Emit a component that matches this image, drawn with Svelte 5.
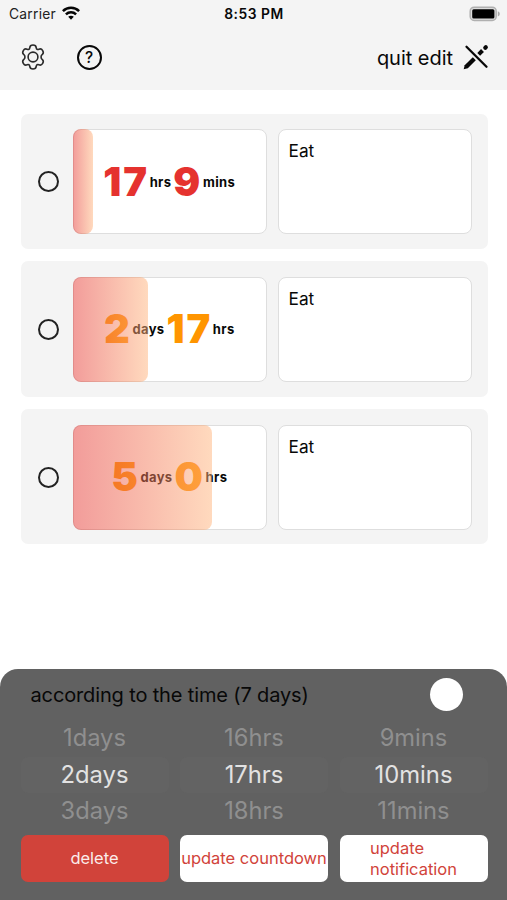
<script>
  const rows = [
    { a: '17', au: 'hrs', b: '9', bu: 'mins', color: '#e5322f', fill: 19.5 },
    { a: '2', au: 'days', b: '17', bu: 'hrs', color: '#ff9500', fill: 75 },
    { a: '5', au: 'days', b: '0', bu: 'hrs', color: '#ff9500', fill: 138.5 },
  ];
  const wheels = [
    ['1days', '2days', '3days'],
    ['16hrs', '17hrs', '18hrs'],
    ['9mins', '10mins', '11mins'],
  ];
</script>

<div class="screen">
  <header>
    <div class="status">
      <div class="carrier">
        <span>Carrier</span>
        <svg width="18" height="14" viewBox="0 0 18 14" fill="none" stroke="#050505" stroke-width="2.5">
          <path d="M.9 5.1C5.4.6 12.6.6 17.1 5.1" />
          <path d="M3.9 8.3c2.9-2.8 7.3-2.8 10.2 0" />
          <path d="M9 13.7 6.2 10.8c1.6-1.5 4-1.5 5.6 0Z" fill="#050505" stroke="none" />
        </svg>
      </div>
      <div class="clock">8:53 PM</div>
      <svg class="battery" width="32" height="16" viewBox="0 0 32 16">
        <rect x="1.2" y="1.2" width="26" height="13.2" rx="4" fill="#dcdcdc" stroke="#b0b0b0" stroke-width="1.5" />
        <rect x="3.2" y="3.2" width="22.2" height="9.2" rx="1.5" fill="#000" />
        <path d="M28.8 5.2c2.6.8 2.6 4.4 0 5.2Z" fill="#aaa" />
      </svg>
    </div>
    <nav>
      <svg class="gear" width="26" height="26" viewBox="0 0 26 26" fill="none" stroke="#2a2a2a" stroke-width="1.6" stroke-linejoin="round">
        <path d="M9.800 3.600C10 1.500 10.800 1 13 1s3 .5 3.200 2.600c.2 1.700 1.200 2.300 2.700 1.600 1.900-.9 2.700-.5 3.800 1.400s1.100 2.800-.6 4c-1.400 1-1.400 3.800 0 4.800 1.700 1.200 1.700 2.100.6 4s-1.900 2.300-3.800 1.400c-1.500-.7-2.500-.1-2.700 1.600-.2 2.100-1 2.600-3.200 2.600s-3-.5-3.200-2.600c-.2-1.700-1.200-2.300-2.700-1.600-1.900.9-2.700.5-3.800-1.400s-1.100-2.800.6-4c1.400-1 1.400-3.800 0-4.800-1.700-1.200-1.700-2.100-.6-4s1.900-2.300 3.800-1.400c1.500.7 2.500.1 2.700-1.600Z" />
        <circle cx="13" cy="13" r="4.900" />
      </svg>
      <div class="help">?</div>
      <div class="quit">
        <span>quit edit</span>
        <svg width="26" height="26" viewBox="0 0 26 26" stroke="#080808" fill="#080808">
          <path d="M.7 25.300 1.700 21.200 9.800 13.200l3 3L4.800 24.200Z" stroke="none" />
          <path d="m15.700 10.300 3.800-3.800" stroke-width="4" />
          <path d="m22.300 3.700.5-.5" stroke-width="4.200" stroke-linecap="round" />
          <path d="m3 2 21.200 21.200" stroke="#f4f4f4" stroke-width="4" />
          <path d="m3.500 2.800 20 20" stroke-width="2.300" stroke-linecap="round" />
        </svg>
      </div>
    </nav>
  </header>

  <main>
    {#each rows as r}
      <section class="card">
        <div class="radio"></div>
        <div class="box timer">
          <div class="time">
            <b style:color={r.color}>{r.a}</b><i>{r.au}</i><b style:color={r.color}>{r.b}</b><i>{r.bu}</i>
          </div>
          <div class="fill" style:width="{r.fill}px"></div>
        </div>
        <div class="box note">Eat</div>
      </section>
    {/each}
  </main>

  <footer>
    <div class="option">
      <span>according to the time (7 days)</span>
      <div class="switch"><div class="knob"></div></div>
    </div>
    <div class="wheels">
      {#each wheels as w}
        <div class="wheel">
          {#each w as item, i}
            <div class="item" class:selected={i === 1}>{item}</div>
          {/each}
        </div>
      {/each}
    </div>
    <div class="actions">
      <button class="delete">delete</button>
      <button>update countdown</button>
      <button class="two"><span>update<br />notification</span></button>
    </div>
  </footer>
</div>

<style>
  :global(body) { margin: 0; background: #fff; }
  .screen {
    width: 507px; height: 900px; display: flex; flex-direction: column;
    overflow: hidden; background: #fff; color: #080808;
    font-family: Inter, "Liberation Sans", sans-serif;
  }
  header { height: 90px; background: #f4f4f4; flex: none; }
  .status {
    height: 28px; display: grid; grid-template-columns: 1fr auto 1fr;
    align-items: center; padding: 0 6px 0 9px; box-sizing: border-box;
    font-size: 13.8px;
  }
  .carrier { display: flex; gap: 6px; align-items: center; letter-spacing: .25px; color: #222; }
  .carrier svg { margin-top: -3px; }
  .clock { font-weight: 600; letter-spacing: .55px; margin-left: -2px; }
  .battery { justify-self: end; margin-top: -1px; }
  nav { height: 58.600px; display: flex; align-items: center; padding: 0 18px 0 20px; }
  .help {
    box-sizing: border-box; width: 25px; height: 25px; margin-left: 30.500px;
    border: 2px solid #080808; border-radius: 50%;
    font-size: 15.500px; font-weight: 500; line-height: 21px; text-align: center;
  }
  .quit { margin-left: auto; display: flex; align-items: center; gap: 10px; font-size: 20px; }
  .quit span { letter-spacing: -.03px; position: relative; top: .5px; }
  main { padding: 23.500px 19.500px 0 20.500px; display: flex; flex-direction: column; gap: 12.500px; flex: 1; }
  .card {
    height: 135.300px; box-sizing: border-box; background: #f4f4f4; border-radius: 7px;
    display: flex; align-items: center; padding: 1px 15.500px 0 17.500px;
  }
  .radio { box-sizing: border-box; width: 21px; height: 21px; border: 2px solid #222; border-radius: 50%; margin-right: 14px; flex: none; }
  .box {
    box-sizing: border-box; width: 194px; height: 105px; border: 1px solid #dedede;
    border-radius: 8px; background: #fff; flex: none;
  }
  .timer { position: relative; display: flex; align-items: center; justify-content: center; margin-right: 11px; }
  .fill {
    position: absolute; left: -1px; top: -1px; bottom: -1px; border-radius: 8px;
    background: linear-gradient(90deg, #e53935, #ffb47c); opacity: .5;
  }
  .time { display: flex; align-items: center; gap: 2px; margin-left: -1.500px; }
  b { font-size: 40px; line-height: 48px; font-weight: 900; letter-spacing: 1.800px; }
  b + i { margin-left: -1.200px; }
  i { font-style: normal; font-size: 13px; font-weight: 700; letter-spacing: .35px; }
  .note { padding: 11px 9.500px; font-size: 17.300px; line-height: 20px; }
  footer {
    height: 231px; box-sizing: border-box; background: #616161; border-radius: 18px 18px 0 0;
    padding: 7px 19.500px 0 20.500px; flex: none;
  }
  .option { height: 37px; display: flex; align-items: center; justify-content: space-between; padding-left: 10px; font-size: 20px; letter-spacing: -.14px; }
  .switch { width: 58px; height: 35px; display: flex; align-items: center; border-radius: 18px; }
  .knob { width: 33.500px; height: 33.500px; border-radius: 50%; background: #fff; }
  .wheels { display: grid; grid-template-columns: repeat(3, 1fr); gap: 11.500px; margin-top: 7px; }
  .item { height: 36.500px; line-height: 36.500px; text-align: center; font-size: 23.700px; color: #8f8f8f; }
  .item.selected { background: #636363; color: #e2e2e2; border-radius: 7px; font-size: 23.800px; }
  .actions { display: grid; grid-template-columns: repeat(3, 1fr); gap: 11.500px; margin-top: 5px; }
  button {
    height: 47.500px; border: 0; border-radius: 7px; background: #fff; color: #d1433a; padding: 0;
    font: 16.500px/21px Inter, "Liberation Sans", sans-serif; white-space: nowrap;
    display: flex; align-items: center; justify-content: center; min-width: 0;
  }
  .delete { background: #d1433a; color: #fbecea; }
  .two span { text-align: left; padding-top: 2px; }
</style>
